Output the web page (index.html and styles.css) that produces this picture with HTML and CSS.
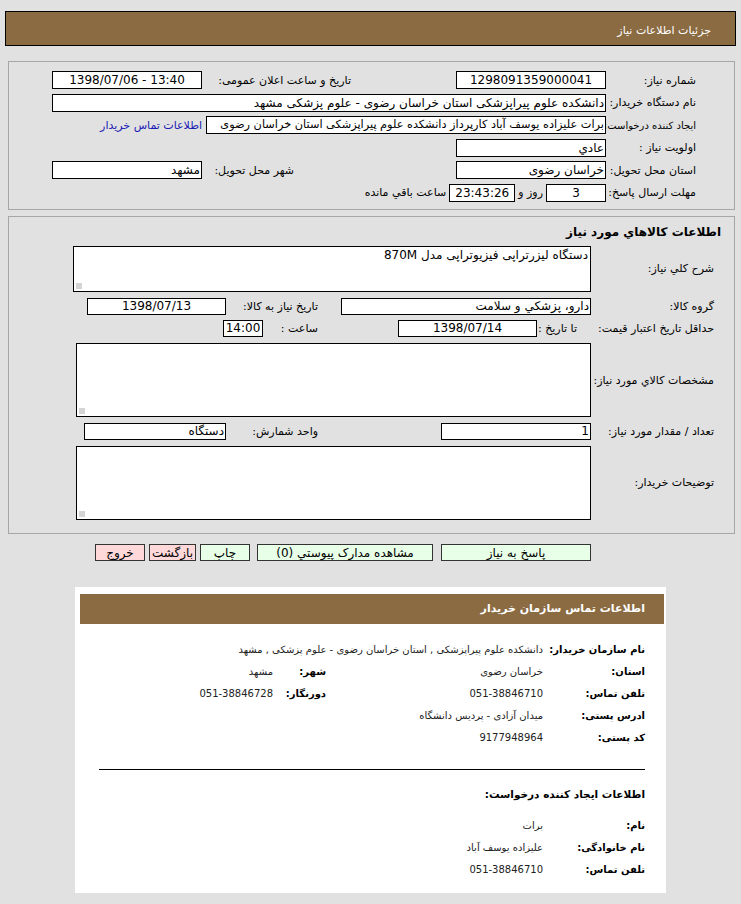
FILE: index.html
```html
<!DOCTYPE html>
<html lang="fa" dir="rtl">
<head>
    <meta charset="UTF-8">
    <title>جزئیات اطلاعات نیاز</title>
    <link rel="stylesheet" href="styles.css">
</head>
<body>

<div class="page-title">جزئیات اطلاعات نیاز</div>

<div class="panel info">
    <div class="row">
        <span class="lbl">شماره نیاز:</span>
        <span class="field w150 center">1298091359000041</span>
        <span class="lbl2 pub">تاریخ و ساعت اعلان عمومی:</span>
        <span class="field w150 center" dir="ltr">1398/07/06 - 13:40</span>
    </div>
    <div class="row">
        <span class="lbl">نام دستگاه خریدار:</span>
        <span class="field w554">دانشکده علوم پیراپزشکی استان خراسان رضوی - علوم پزشکی مشهد</span>
    </div>
    <div class="row">
        <span class="lbl narrow">ایجاد کننده درخواست:</span>
        <span class="field w400 long">برات علیزاده یوسف آباد کارپرداز دانشکده علوم پیراپزشکی استان خراسان رضوی</span>
        <a class="contact-link" href="#">اطلاعات تماس خریدار</a>
    </div>
    <div class="row">
        <span class="lbl">اولویت نیاز :</span>
        <span class="field w150">عادي</span>
    </div>
    <div class="row">
        <span class="lbl">استان محل تحویل:</span>
        <span class="field w150">خراسان رضوی</span>
        <span class="lbl2 city">شهر محل تحویل:</span>
        <span class="field w150">مشهد</span>
    </div>
    <div class="row">
        <span class="lbl">مهلت ارسال پاسخ:</span>
        <span class="field w60 center">3</span>
        <span class="txt">روز و</span>
        <span class="field w66 center">23:43:26</span>
        <span class="txt">ساعت باقي مانده</span>
    </div>
</div>

<div class="panel goods">
    <div class="panel-title">اطلاعات کالاهاي مورد نیاز</div>

    <div class="row tall46">
        <span class="lbl-g">شرح کلي نیاز:</span>
        <div class="area first">دستگاه لیزرتراپی فیزیوتراپی مدل 870M</div>
    </div>
    <div class="row">
        <span class="lbl-g">گروه کالا:</span>
        <span class="field w250">دارو، پزشکي و سلامت</span>
        <span class="lbl2 need-date">تاریخ نیاز به کالا:</span>
        <span class="field w139 center">1398/07/13</span>
    </div>
    <div class="row">
        <span class="lbl-g">حداقل تاریخ اعتبار قیمت:</span>
        <span class="lbl2 until">تا تاریخ :</span>
        <span class="field w139 center">1398/07/14</span>
        <span class="lbl2 hour">ساعت :</span>
        <span class="field w40 center">14:00</span>
    </div>
    <div class="row tall74">
        <span class="lbl-g">مشخصات کالاي مورد نیاز:</span>
        <div class="area"></div>
    </div>
    <div class="row">
        <span class="lbl-g">تعداد / مقدار مورد نیاز:</span>
        <span class="field w150">1</span>
        <span class="lbl2 unit">واحد شمارش:</span>
        <span class="field w142">دستگاه</span>
    </div>
    <div class="row tall74">
        <span class="lbl-g">توضیحات خریدار:</span>
        <div class="area"></div>
    </div>
</div>

<div class="actions">
    <button class="btn green b-reply">پاسخ به نیاز</button>
    <button class="btn green b-docs">مشاهده مدارک پیوستي (0)</button>
    <button class="btn green b-print">چاپ</button>
    <button class="btn pink b-back">بازگشت</button>
    <button class="btn pink b-exit">خروج</button>
</div>

<div class="card">
    <div class="card-head">اطلاعات تماس سازمان خریدار</div>

    <div class="card-grid">
        <span class="k">نام سازمان خریدار:</span>
        <span class="v wide">دانشکده علوم پیراپزشکی , استان خراسان رضوی - علوم پزشکی , مشهد</span>

        <span class="k">استان:</span>
        <span class="v">خراسان رضوی</span>
        <span class="k">شهر:</span>
        <span class="v">مشهد</span>

        <span class="k">تلفن تماس:</span>
        <span class="v">051-38846710</span>
        <span class="k">دورنگار:</span>
        <span class="v">051-38846728</span>

        <span class="k">ادرس پستی:</span>
        <span class="v wide">میدان آزادی - پردیس دانشگاه</span>

        <span class="k">کد پستی:</span>
        <span class="v wide">9177948964</span>
    </div>

    <hr class="sep">

    <div class="card-sub">اطلاعات ایجاد کننده درخواست:</div>

    <div class="card-grid">
        <span class="k">نام:</span>
        <span class="v wide">برات</span>

        <span class="k">نام خانوادگی:</span>
        <span class="v wide">علیزاده یوسف آباد</span>

        <span class="k">تلفن تماس:</span>
        <span class="v wide">051-38846710</span>
    </div>
</div>

</body>
</html>
```

FILE: styles.css
```css
body {
    margin: 0;
    padding: 11px 0 11px 0;
    background: #e1e1e1;
    font-family: "DejaVu Sans", sans-serif;
    font-size: 11px;
    color: #000;
}
.page-title {
    margin: 0 5px;
    height: 33px;
    line-height: 38px;
    background: #8b6b42;
    border: 1px solid #000;
    color: #fff;
    padding-right: 24px;
}
.panel {
    border: 1px solid #a6a6a6;
    margin: 0 6px 0 8px;
    box-sizing: border-box;
}
.info {
    margin-top: 15px;
    height: 149px;
    padding: 9px 38px 0 0;
}
.goods {
    margin-top: 6px;
    height: 318px;
    padding: 7px 20px 0 0;
}
.row {
    display: flex;
    align-items: center;
    height: 18px;
    margin-bottom: 4.6px;
}
.goods .row {
    height: 17px;
    margin-bottom: 0;
    margin-top: 5.8px;
}
.goods .row.tall46 { height: 46px; }
.goods .row.tall74 { height: 74px; }
.lbl {
    width: 90px;
    flex: none;
    white-space: nowrap;
}
.lbl.narrow {
    font-size: 10px;
    letter-spacing: -0.2px;
}
.lbl-g {
    width: 123px;
    flex: none;
    white-space: nowrap;
}
.lbl2 {
    flex: none;
    white-space: nowrap;
}
.pub { margin-right: 105px; width: 149px; }
.city { margin-right: 162px; width: 92px; }
.need-date { margin-right: 23px; width: 92px; }
.until { margin-right: 14px; width: 40px; }
.hour { margin-right: 80px; width: 55px; }
.unit { margin-right: 123px; width: 92px; }
.txt {
    margin: 0 3px;
    white-space: nowrap;
}
.field {
    flex: none;
    box-sizing: border-box;
    height: 18px;
    line-height: 16px;
    background: #fff;
    border: 1px solid #000;
    padding: 0 1px;
    white-space: nowrap;
    overflow: hidden;
    font-size: 12px;
}
.goods .field {
    height: 17px;
    line-height: 15px;
}
.field.long {
    font-size: 11.3px;
    letter-spacing: -0.1px;
}
.center { text-align: center; }
.w40 { width: 40px; }
.w60 { width: 60px; }
.w66 { width: 66px; }
.w139 { width: 139px; }
.w142 { width: 142px; }
.w150 { width: 150px; }
.w250 { width: 250px; }
.w400 { width: 400px; }
.w554 { width: 554px; }
.contact-link {
    margin-right: 4px;
    color: #1a1ab4;
    text-decoration: none;
    white-space: nowrap;
}
.panel-title {
    font-weight: bold;
    font-size: 12px;
    height: 16px;
    line-height: 16px;
    margin-right: -7px;
}
.area {
    box-sizing: border-box;
    width: 515px;
    height: 100%;
    background: #fff;
    border: 1px solid #000;
    padding: 1px 2px;
    font-size: 12px;
    position: relative;
}
.area.first {
    width: 518px;
}
.area::after {
    content: "";
    position: absolute;
    left: 2px;
    bottom: 2px;
    width: 6px;
    height: 6px;
    background: radial-gradient(circle, #bdbdbd 0.6px, transparent 0.9px) 0 0 / 2px 2px;
}
.actions {
    display: flex;
    gap: 4px;
    padding-right: 150px;
    margin-top: 10px;
    height: 17px;
}
.btn {
    box-sizing: border-box;
    height: 17px;
    border: 1px solid #333;
    padding: 0;
    font: 12px "DejaVu Sans", sans-serif;
    line-height: 14px;
    color: #000;
}
.green { background: #e8ffe8; }
.pink { background: #ffd9d9; }
.b-reply { width: 150px; margin-left: 4px; }
.b-docs { width: 176px; margin-left: 3px; }
.b-print { width: 50px; }
.b-back { width: 47px; }
.b-exit { width: 50px; }
.card {
    margin: 26px 75px 0 75px;
    width: 591px;
    box-sizing: border-box;
    background: #fff;
    padding: 7px 2px 13px 5px;
}
.card-head {
    height: 30px;
    line-height: 30px;
    background: #8b6b42;
    color: #fff;
    font-weight: bold;
    padding-right: 19px;
}
.card-grid {
    display: grid;
    grid-template-columns: 102px 217px 53px auto;
    grid-auto-rows: 22px;
    align-items: center;
    margin-right: 19px;
    margin-top: 14px;
}
.k {
    font-weight: bold;
    font-size: 10px;
    letter-spacing: -0.2px;
    white-space: nowrap;
}
.v {
    font-size: 10px;
    color: #222;
    white-space: nowrap;
}
.v.wide { grid-column: span 3; }
.sep {
    border: none;
    border-top: 1px solid #000;
    height: 0;
    margin: 21px 19px 0 19px;
}
.card-sub {
    font-weight: bold;
    font-size: 10.5px;
    margin-right: 19px;
    height: 22px;
    line-height: 22px;
    margin-top: 13px;
}
.card-sub + .card-grid { margin-top: 9px; }
```
